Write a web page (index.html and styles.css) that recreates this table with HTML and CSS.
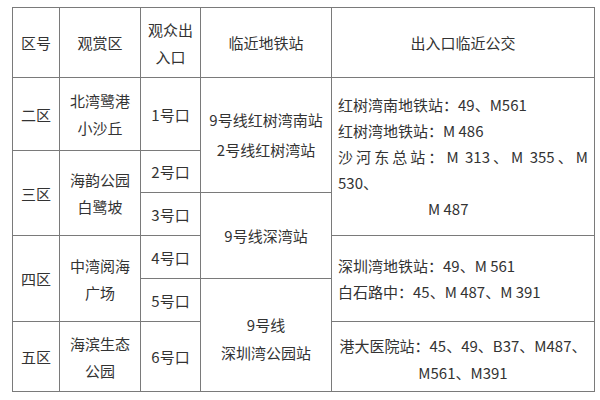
FILE: index.html
```html
<!DOCTYPE html>
<html lang="zh">
<head>
<meta charset="utf-8">
<link rel="stylesheet" href="styles.css">
</head>
<body>
<table class="tbl">
  <colgroup>
    <col class="c1"><col class="c2"><col class="c3"><col class="c4"><col class="c5">
  </colgroup>
  <tr class="rh">
    <td>区号</td>
    <td>观赏区</td>
    <td>观众出<br>入口</td>
    <td>临近地铁站</td>
    <td>出入口临近公交</td>
  </tr>
  <tr class="r1">
    <td>二区</td>
    <td>北湾鹭港<br>小沙丘</td>
    <td>1号口</td>
    <td rowspan="2" class="st st1">9号线红树湾南站<br>2号线红树湾站</td>
    <td rowspan="3" class="bus">
      <div class="ln">红树湾南地铁站：49、M561</div>
      <div class="ln">红树湾地铁站：M 486</div>
      <div class="ln just">沙河东总站：M 313、M 355、M</div>
      <div class="ln">530、</div>
      <div class="ln ind">M 487</div>
    </td>
  </tr>
  <tr class="r2">
    <td rowspan="2">三区</td>
    <td rowspan="2">海韵公园<br>白鹭坡</td>
    <td>2号口</td>
  </tr>
  <tr class="r3">
    <td>3号口</td>
    <td rowspan="2" class="st">9号线深湾站</td>
  </tr>
  <tr class="r4">
    <td rowspan="2">四区</td>
    <td rowspan="2">中湾阅海<br>广场</td>
    <td>4号口</td>
    <td rowspan="2" class="bus">
      <div class="ln">深圳湾地铁站：49、M 561</div>
      <div class="ln">白石路中：45、M 487、M 391</div>
    </td>
  </tr>
  <tr class="r5">
    <td>5号口</td>
    <td rowspan="2" class="st st3">9号线<br>深圳湾公园站</td>
  </tr>
  <tr class="r6">
    <td>五区</td>
    <td>海滨生态<br>公园</td>
    <td>6号口</td>
    <td class="bus center">港大医院站：45、49、B37、M487、<br>M561、M391</td>
  </tr>
</table>
</body>
</html>
```

FILE: styles.css
```css
html, body {
  margin: 0;
  padding: 0;
  background: #ffffff;
}
body {
  padding: 7px 0 0 12px;
  font-family: "Noto Sans CJK SC", sans-serif;
  color: #333333;
  font-size: 15px;
}
.tbl {
  border-collapse: collapse;
  table-layout: fixed;
  width: 582px;
}
.c1 { width: 47px; }
.c2 { width: 81px; }
.c3 { width: 60px; }
.c4 { width: 131px; }
.c5 { width: 263px; }
.tbl td {
  border: 1px solid #7a7a7a;
  text-align: center;
  vertical-align: middle;
  padding: 0;
  line-height: 27px;
}
.rh { height: 70px; }
.r1 { height: 73px; }
.r2 { height: 42px; }
.r3 { height: 43px; }
.r4 { height: 43px; }
.r5 { height: 43px; }
.r6 { height: 70px; }
.tbl td.st { line-height: 30px; }
.tbl td.st3 { line-height: 28px; padding-top: 8px; }
.tbl td.bus {
  text-align: left;
  padding: 0 6px;
  line-height: 26px;
}
.tbl td.bus.center {
  text-align: center;
  line-height: 27px;
  padding-top: 4px;
}
.ln { white-space: nowrap; }
.ln.just {
  text-align: justify;
  text-align-last: justify;
  white-space: normal;
}
.ln.ind { padding-left: 90px; }
```
